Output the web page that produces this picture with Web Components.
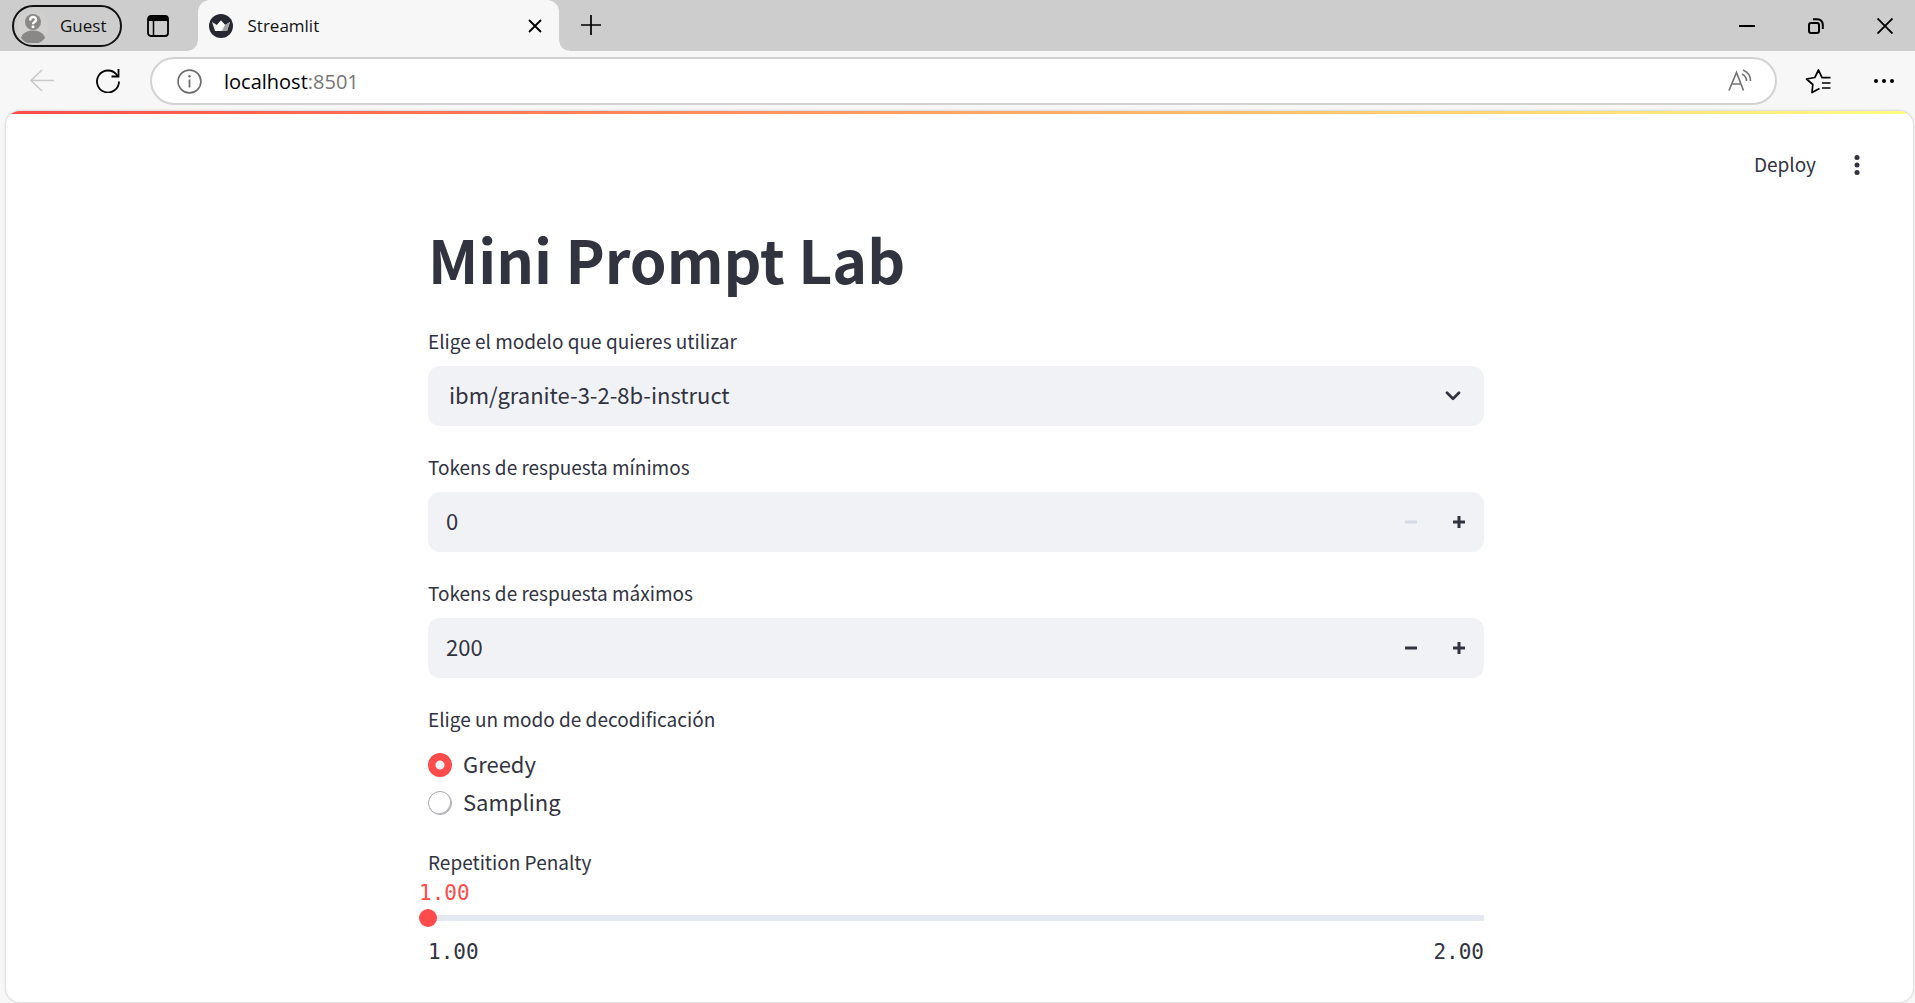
<!DOCTYPE html>
<html lang="es">
<head>
<meta charset="utf-8">
<title>Streamlit</title>
<style>
html,body{height:100%}
body{margin:0;background:#f7f7f7;--ui:"Open Sans","Noto Sans",sans-serif;--sans:"Noto Sans CJK SC",sans-serif;--mono:"DejaVu Sans Mono",monospace;--ink:#31333f;--red:#ff4b4b;--field:#f0f2f6}
</style>
</head>
<body>
<browser-window>
  <browser-tabs slot="tabs" profile="Guest" label="Streamlit"></browser-tabs>
  <browser-toolbar slot="toolbar" host-name="localhost" port=":8501"></browser-toolbar>
  <app-page heading="Mini Prompt Lab">
    <select-field label="Elige el modelo que quieres utilizar" value="ibm/granite-3-2-8b-instruct"></select-field>
    <number-field label="Tokens de respuesta mínimos" value="0" min="0"></number-field>
    <number-field label="Tokens de respuesta máximos" value="200" min="0"></number-field>
    <radio-field label="Elige un modo de decodificación" options="Greedy,Sampling" value="Greedy"></radio-field>
    <slider-field label="Repetition Penalty" min="1.00" max="2.00" value="1.00"></slider-field>
  </app-page>
</browser-window>
<script>
const base = `*{box-sizing:border-box}button{border:0;background:none;padding:0;margin:0;color:inherit;font:inherit;display:flex;align-items:center;justify-content:center}svg{display:block;flex:none}`;
const fieldCss = `:host{display:block;font-family:var(--sans);color:var(--ink)}
.label{display:flex;align-items:center;height:36px;padding-bottom:2px;margin-bottom:6px;font-size:19px;line-height:28px}`;
class Base extends HTMLElement {
  connectedCallback() {
    if (this.shadowRoot) return;
    this.attachShadow({mode:'open'}).innerHTML = `<style>${base}${this.css()}</style>${this.html()}`;
    this.ready();
  }
  a(n) { return this.getAttribute(n) || ''; }
  ready() {}
}
customElements.define('browser-window', class extends Base {
  css() { return `:host{display:flex;flex-direction:column;min-height:100vh}main{flex:1;display:flex;flex-direction:column;padding:0 2px 1px 6px}`; }
  html() { return `<slot name="tabs"></slot><slot name="toolbar"></slot><main><slot></slot></main>`; }
});
customElements.define('browser-tabs', class extends Base {
  css() { return `:host{display:flex;align-items:center;height:51px;background:#cdcdcd;font:17px/24px var(--ui);color:#111;padding-left:12px}
  .profile{height:42px;border:2px solid #111;border-radius:21px;padding:0 13px 0 4px;gap:12px}
  .panes{width:28px;height:28px;margin:0 26px 0 22px}
  .tab{align-self:stretch;width:361px;display:flex;align-items:center;background:#f7f7f7;border-radius:12px 12px 0 0;padding:0 15px 0 11px;gap:15px;position:relative}
  .tab::before,.tab::after{content:"";position:absolute;bottom:0;width:10px;height:10px}
  .tab::before{right:100%;background:radial-gradient(circle at 0 0,transparent 9px,#f7f7f7 10px)}
  .tab::after{left:100%;background:radial-gradient(circle at 100% 0,transparent 9px,#f7f7f7 10px)}
  .tab span{flex:1}
  .new{margin-left:20px;padding-bottom:2px}
  .controls{margin-left:auto;display:flex;gap:9px}
  .controls button{width:60px;height:50px}`; }
  html() { return `
  <button class="profile"><svg width="30" height="34" viewBox="0 0 30 34"><circle cx="15" cy="17" r="15" fill="#d2d0ce"/><circle cx="15" cy="13" r="8" fill="#8a8886"/><path d="M3 29c2-10 22-10 24 0a15 15 0 0 1-24 0z" fill="#8a8886"/><path d="M12.200 11.400c0-4.400 5.800-4.400 5.800-.6 0 2.200-3 2.200-3 4.400" fill="none" stroke="#fff" stroke-width="2.400"/><circle cx="15" cy="17.800" r="1.500" fill="#fff"/></svg>${this.a('profile')}</button>
  <button class="panes" aria-label="Tab actions"><svg width="22" height="22" viewBox="0 0 22 22" fill="none" stroke="#000" stroke-width="1.800"><rect x="1" y="1" width="20" height="20" rx="3"/><path d="M6.500 6v15" stroke-width="1.500"/><path d="M1 3.800h20" stroke-width="4.500"/></svg></button>
  <div class="tab"><svg width="24" height="24" viewBox="0 0 24 24"><circle cx="12" cy="12" r="12" fill="#262730"/><path d="M3 8l5 3 4-4.500 4 4.500 5-3-3 9H6z" fill="#eee"/><path d="M12 6.500l4 4.500-6 6H6l2-6z" fill="#fff"/><path d="M16 11l5-3-3 9h-5z" fill="#a3a3a6"/></svg><span>${this.a('label')}</span>
  <button aria-label="Close tab"><svg width="18" height="18" viewBox="0 0 18 18" stroke="#000" stroke-width="1.800"><path d="M3 3l12 12M15 3L3 15"/></svg></button></div>
  <button class="new" aria-label="New tab"><svg width="24" height="24" viewBox="0 0 24 24" stroke="#000" stroke-width="1.700"><path d="M12 2v20M2 12h20"/></svg></button>
  <div class="controls"><button aria-label="Minimize"><svg width="16" height="16" viewBox="0 0 16 16" stroke="#000" stroke-width="2"><path d="M0 8h16"/></svg></button>
  <button aria-label="Restore"><svg width="16" height="16" viewBox="0 0 16 16" fill="none" stroke="#000" stroke-width="2"><rect x="1" y="5" width="10" height="10" rx="2"/><path d="M5 1.200h4.500a5.300 5.300 0 0 1 5.300 5.300V11"/></svg></button>
  <button aria-label="Close"><svg width="16" height="16" viewBox="0 0 16 16" stroke="#000" stroke-width="1.900"><path d="M.5.5l15 15M15.500.5l-15 15"/></svg></button></div>`; }
});
customElements.define('browser-toolbar', class extends Base {
  css() { return `:host{display:flex;align-items:center;height:60px;padding:0 21px 0 29px;color:#111}
  .reload{margin:0 30px 0 41px}
  .address{flex:1;display:flex;align-items:center;height:48px;background:#fff;border:2px solid #d2d2d2;border-radius:24px;padding:0 23px 0 25px;gap:22px}
  .url{flex:1;padding-top:1px;font:20px/28px var(--ui);color:#767676}.url b{font-weight:400;color:#000}
  .fav{margin:0 43px 0 28px}`; }
  html() { return `
  <button aria-label="Back"><svg width="26" height="26" viewBox="0 0 26 26" fill="none" stroke="#c8c8c8" stroke-width="1.600"><path d="M25 12.500H2M13 2L2 12.500l11 10.500"/></svg></button>
  <button class="reload" aria-label="Reload"><svg width="24" height="24" viewBox="0 0 24 24" fill="none" stroke="#000" stroke-width="1.800"><path d="M23 12.500A11 11 0 1 1 20.500 5.500L22 7.500"/><path d="M22.500 0v7.500H15.500"/></svg></button>
  <div class="address"><svg width="25" height="25" viewBox="0 0 25 25" fill="none" stroke="#6b6b6b" stroke-width="1.600"><circle cx="12.500" cy="12.500" r="11.400"/><path d="M12.500 10.500v8" stroke-width="1.800"/><circle cx="12.500" cy="7.300" r="1.200" fill="#6b6b6b" stroke="none"/></svg>
  <div class="url"><b>${this.a('host-name')}</b>${this.a('port')}</div>
  <button aria-label="Read aloud"><svg width="24" height="24" viewBox="0 0 24 24" fill="none" stroke="#767676" stroke-width="1.700"><path d="M1 21.500L8.500 3.500 15.500 21.500M3.500 15h9.500M14 5c3 1.500 4.500 4 4.500 7M15 1c4.500 1.800 7.500 6 7.500 11"/></svg></button></div>
  <button class="fav" aria-label="Favorites"><svg width="26" height="26" viewBox="0 0 26 26" fill="none" stroke="#000" stroke-width="1.700" stroke-linejoin="round"><path d="M14.500 20.500L7 24.500 7.800 16.500 1.500 11 9.800 9.500 13.500 2 17 9.700h8.500M17 15h8.500M17 20h8.500"/></svg></button>
  <button aria-label="Settings and more"><svg width="20" height="6" viewBox="0 0 20 6"><circle cx="2" cy="3" r="2"/><circle cx="10" cy="3" r="2"/><circle cx="18" cy="3" r="2"/></svg></button>`; }
});
customElements.define('app-page', class extends Base {
  css() { return `:host{flex:1;display:flex;flex-direction:column;background:#fff;border-radius:14px;overflow:hidden;box-shadow:0 0 3px #bbb;font-family:var(--sans);color:var(--ink)}
  .bar{height:3px;background:linear-gradient(90deg,#ff4b4b,#fffd80)}
  header{display:flex;align-items:center;justify-content:flex-end;height:102px;padding-right:42px;gap:27px;font-size:19px;line-height:28px}
  header button:first-child{padding-bottom:2px}
  header button:last-child{width:28px;height:36px}
  .scroll{padding-right:7px}
  section{width:100%;max-width:1056px;margin:0 auto;padding-bottom:36px;display:flex;flex-direction:column;gap:24px}
  h1{margin:0;padding-top:2px;font-size:59px;line-height:82px;font-weight:700}`; }
  html() { return `<div class="bar"></div><header><button>Deploy</button><button aria-label="Menu"><svg width="6" height="20" viewBox="0 0 6 20" fill="#31333f"><circle cx="3" cy="2.500" r="2.500"/><circle cx="3" cy="10" r="2.500"/><circle cx="3" cy="17.500" r="2.500"/></svg></button></header><div class="scroll"><section><h1>${this.a('heading')}</h1><slot></slot></section></div>`; }
});
customElements.define('select-field', class extends Base {
  css() { return fieldCss + `.box{display:grid;align-items:center;height:60px;background:var(--field);border-radius:12px}
  select,.box svg{grid-area:1/1}select{appearance:none;width:100%;height:60px;border:0;background:none;padding:0 60px 4px 21px;font:22px/32px var(--sans);color:var(--ink)}
  svg{justify-self:end;margin-right:23px;pointer-events:none}`; }
  html() { return `<label class="label" for="s">${this.a('label')}</label><div class="box"><select id="s"><option>${this.a('value')}</option></select><svg width="16" height="10" viewBox="0 0 16 10" fill="none" stroke="#31333f" stroke-width="2.700" stroke-linecap="round" stroke-linejoin="round"><path d="M2 1.700l6 6 6-6"/></svg></div>`; }
});
customElements.define('number-field', class extends Base {
  css() { return fieldCss + `.box{display:flex;height:60px;padding-right:1px;background:var(--field);border-radius:12px;overflow:hidden}
  input{flex:1;min-width:0;border:0;background:none;padding:0 0 4px 18px;font:22px/32px var(--sans);color:var(--ink)}
  button{width:48px}button:disabled{color:#d5dae5}`; }
  html() { return `<label class="label" for="n">${this.a('label')}</label><div class="box"><input id="n" type="text" inputmode="numeric" value="${this.a('value')}">
  <button id="dec" aria-label="Decrease"><svg width="12" height="12" viewBox="0 0 12 12" stroke="currentColor" stroke-width="3"><path d="M0 6h12"/></svg></button>
  <button id="inc" aria-label="Increase"><svg width="12" height="12" viewBox="0 0 12 12" stroke="currentColor" stroke-width="3"><path d="M0 6h12M6 0v12"/></svg></button></div>`; }
  ready() {
    const $ = i => this.shadowRoot.getElementById(i), n = $('n'), min = +this.a('min');
    const set = v => { n.value = Math.max(min, v); $('dec').disabled = +n.value <= min; };
    $('dec').onclick = () => set(+n.value - 1);
    $('inc').onclick = () => set(+n.value + 1);
    n.onchange = () => set(+n.value || min);
    set(+n.value);
  }
});
customElements.define('radio-field', class extends Base {
  css() { return fieldCss + `fieldset{border:0;margin:0;padding:0;min-width:0}legend{padding:0}
  .options{display:flex;flex-direction:column;align-items:flex-start;gap:2px;padding-top:3px}
  .options label{display:flex;align-items:center;gap:11px;height:36px;font-size:22px;line-height:32px}
  .options span{padding-bottom:4px}
  input{appearance:none;width:24px;height:24px;margin:0;border-radius:50%;background:#fff;border:1px solid #a9aaaf;box-shadow:inset -1px -1px 0 #b5b6ba}
  input:checked{border:0;box-shadow:none;background:radial-gradient(circle,#f4f0f4 4px,var(--red) 5px)}`; }
  html() { return `<fieldset><legend class="label">${this.a('label')}</legend><div class="options">${this.a('options').split(',').map(o => `<label><input type="radio" name="r" value="${o}"${o === this.a('value') ? ' checked' : ''}><span>${o}</span></label>`).join('')}</div></fieldset>`; }
});
customElements.define('slider-field', class extends Base {
  css() { return fieldCss + `.label{margin:0}
  .wrap{margin:0 -9px;display:flex;flex-direction:column}
  output{color:var(--red)}output,.range{font:21px/24px var(--mono)}
  input{appearance:none;width:100%;height:18px;margin:4px 0 13px;background:linear-gradient(#e4e8f0,#e4e8f0) center/calc(100% - 18px) 6px no-repeat}
  input::-webkit-slider-thumb{appearance:none;width:18px;height:18px;border-radius:50%;background:var(--red)}
  .range{display:flex;justify-content:space-between}`; }
  html() { return `<label class="label" for="v">${this.a('label')}</label><div class="wrap"><output for="v">${this.a('value')}</output><input id="v" type="range" min="${this.a('min')}" max="${this.a('max')}" step="0.01" value="${this.a('value')}"></div><div class="range"><span>${this.a('min')}</span><span>${this.a('max')}</span></div>`; }
  ready() {
    const i = this.shadowRoot.querySelector('input'), o = this.shadowRoot.querySelector('output');
    i.oninput = () => { o.textContent = (+i.value).toFixed(2); };
  }
});
</script>
</body>
</html>
